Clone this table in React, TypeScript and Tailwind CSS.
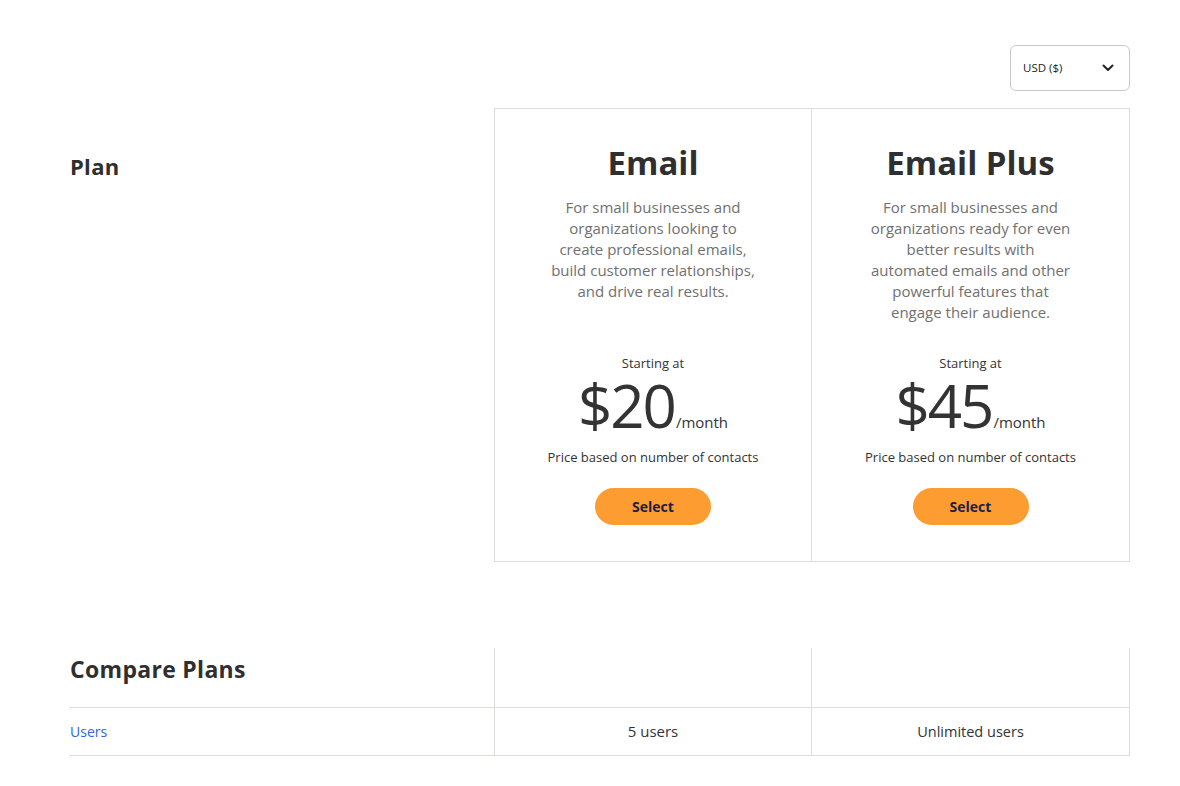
import React from "react";

const font = { fontFamily: '"Open Sans", "Noto Sans", sans-serif' };

function Chevron() {
  return (
    <svg width="12" height="8" viewBox="0 0 12 8" fill="none">
      <path d="M1.5 1.5L6 6L10.5 1.5" stroke="#222" strokeWidth="2" strokeLinecap="round" strokeLinejoin="round" />
    </svg>
  );
}

type Plan = { name: string; desc: string[]; price: string };

const plans: Plan[] = [
  {
    name: "Email",
    desc: [
      "For small businesses and",
      "organizations looking to",
      "create professional emails,",
      "build customer relationships,",
      "and drive real results.",
    ],
    price: "$20",
  },
  {
    name: "Email Plus",
    desc: [
      "For small businesses and",
      "organizations ready for even",
      "better results with",
      "automated emails and other",
      "powerful features that",
      "engage their audience.",
    ],
    price: "$45",
  },
];

function PlanCard({ p, last }: { p: Plan; last?: boolean }) {
  return (
    <div
      className={`flex flex-col items-center border-l border-[#dcdcd8] pt-[34px] pb-[36px] ${last ? "border-r" : ""}`}
    >
      <h2 className="text-[33px] leading-[40px] font-bold text-[#2f2f2f]">{p.name}</h2>
      <p className="mt-[14px] h-[126px] text-center text-[15px] leading-[21px] text-[#707070]">
        {p.desc.map((l, i) => (
          <span key={i} className="block">
            {l}
          </span>
        ))}
      </p>
      <div className="mt-[30px] text-[13px] leading-[20px] text-[#333]">Starting at</div>
      <div className="flex items-baseline leading-none text-[#333] mt-[2px]">
        <span className="text-[60px] leading-[60px] tracking-[-2px]">{p.price}</span>
        <span className="text-[15px] ml-[1px]">/month</span>
      </div>
      <div className="mt-[12px] text-[13px] leading-[20px] text-[#333]">Price based on number of contacts</div>
      <button className="mt-[21px] h-[37px] w-[116px] rounded-full bg-[#fd9c31] text-[14px] font-bold text-[#1b1f4b]">
        Select
      </button>
    </div>
  );
}

export default function App() {
  return (
    <div className="min-h-[786px] w-full bg-white" style={font}>
      <div className="mx-[70px] w-[1060px] pt-[45px]">
        <div className="flex justify-end">
          <div className="flex h-[46px] w-[120px] items-center justify-between rounded-[6px] border border-[#c9c9c9] pl-[12px] pr-[15px]">
            <span className="text-[11.5px] text-[#222]">USD ($)</span>
            <Chevron />
          </div>
        </div>
        <div className="mt-[17px] grid grid-cols-[424px_317px_319px]">
          <div className="pt-[44px]">
            <h1 className="text-[22px] leading-[28px] font-bold text-[#2f2f2f] tracking-[0.3px]">Plan</h1>
          </div>
          <div className="col-span-2 grid grid-cols-[317px_319px] border-y border-[#dcdcd8]">
            <PlanCard p={plans[0]} />
            <PlanCard p={plans[1]} last />
          </div>
        </div>

        <div className="mt-[86px] grid grid-cols-[424px_317px_319px]">
          <div className="h-[60px] border-b border-[#dcdcd8] pt-[5px]">
            <h2 className="text-[23px] leading-[32px] font-bold text-[#2f2f2f] tracking-[0.3px]">Compare Plans</h2>
          </div>
          <div className="h-[60px] border-b border-l border-[#dcdcd8]" />
          <div className="h-[60px] border-b border-l border-r border-[#dcdcd8]" />
          <div className="flex h-[48px] items-center border-b border-[#dcdcd8]">
            <span className="text-[14px] text-[#2f66d8]">Users</span>
          </div>
          <div className="flex h-[48px] items-center justify-center border-b border-l border-[#dcdcd8] text-[15px] text-[#333]">
            5 users
          </div>
          <div className="flex h-[48px] items-center justify-center border-b border-l border-r border-[#dcdcd8] text-[14.5px] text-[#333]">
            Unlimited users
          </div>
        </div>
      </div>
    </div>
  );
}
